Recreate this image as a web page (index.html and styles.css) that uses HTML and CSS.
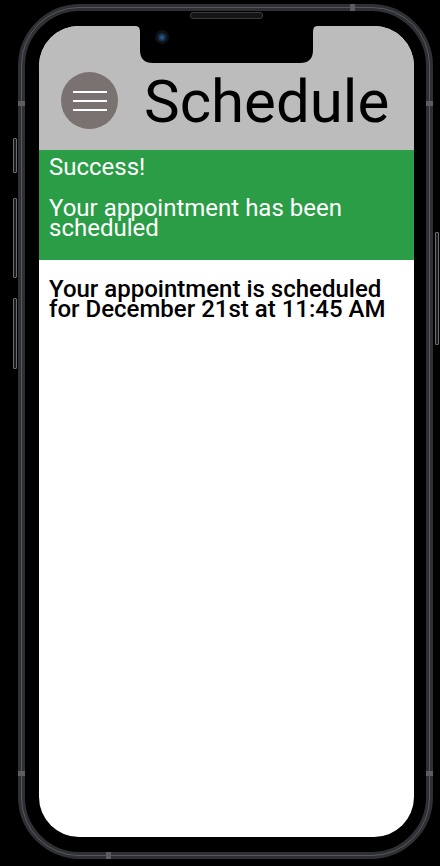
FILE: index.html
```html
<!DOCTYPE html>
<html lang="en">
<head>
<meta charset="utf-8">
<title>Schedule</title>
<link rel="stylesheet" href="styles.css">
</head>
<body>
<div class="device">
  <span class="frame-line"></span>
  <span class="btn btn-mute"></span>
  <span class="btn btn-vol-up"></span>
  <span class="btn btn-vol-down"></span>
  <span class="btn btn-power"></span>
  <span class="band band-top"></span>
  <span class="band band-left1"></span>
  <span class="band band-right1"></span>
  <span class="band band-left2"></span>
  <span class="band band-right2"></span>
  <span class="band band-bottom"></span>
  <span class="speaker"></span>
  <div class="screen">
    <header class="topbar">
      <button class="menu-btn" aria-label="Menu">
        <span class="menu-line"></span>
        <span class="menu-line"></span>
        <span class="menu-line"></span>
      </button>
      <h1 class="title">Schedule</h1>
    </header>
    <div class="alert">
      <p class="alert-title">Success!</p>
      <p class="alert-text">Your appointment has been scheduled</p>
    </div>
    <main class="content">
      <p class="confirm">Your appointment is scheduled for December 21st at 11:45 AM</p>
    </main>
  </div>
  <svg class="notch" width="181" height="38" viewBox="0 0 181 38" aria-hidden="true">
    <path d="M0 0 H181 Q177 0 177 6 V24 Q177 37 164 37 H17 Q4 37 4 24 V6 Q4 0 0 0 Z" fill="#000"/>
  </svg>
  <span class="camera"></span>
</div>
</body>
</html>
```

FILE: styles.css
```css
html, body {
  margin: 0;
  padding: 0;
}

body {
  background: #000;
  width: 440px;
  height: 866px;
  overflow: hidden;
  font-family: Roboto, "Liberation Sans", Arial, sans-serif;
}

.device {
  position: relative;
  box-sizing: border-box;
  width: 415px;
  height: 855px;
  margin: 4px 0 0 18px;
  padding: 15px 12px 15px 14px;
  border: 7px solid #2e3034;
  border-radius: 62px;
  background: #000;
}

.frame-line {
  position: absolute;
  inset: -4px;
  border: 1px solid #55585d;
  border-radius: 58px;
  pointer-events: none;
}

.btn {
  position: absolute;
  width: 2px;
  border: 1px solid #6a6c70;
  border-radius: 1px;
  background: #1a1b1d;
}

.btn-mute { left: -12px; top: 127px; height: 33px; }
.btn-vol-up { left: -12px; top: 187px; height: 78px; }
.btn-vol-down { left: -12px; top: 287px; height: 69px; }
.btn-power { right: -13px; top: 221px; height: 111px; }

.band {
  position: absolute;
  background: #5b5d61;
}

.band-top { top: -7px; left: 325px; width: 5px; height: 7px; }
.band-left1 { left: -7px; top: 90px; width: 7px; height: 5px; }
.band-right1 { right: -7px; top: 90px; width: 7px; height: 5px; }
.band-left2 { left: -7px; top: 760px; width: 7px; height: 5px; }
.band-right2 { right: -7px; top: 760px; width: 7px; height: 5px; }
.band-bottom { bottom: -7px; left: 81px; width: 5px; height: 7px; }

.speaker {
  position: absolute;
  left: 165px;
  top: 1px;
  width: 71px;
  height: 5px;
  border: 1px solid #3a3b3e;
  border-radius: 3px;
  background: #151517;
}

.notch {
  position: absolute;
  left: 111px;
  top: 15px;
}

.camera {
  position: absolute;
  left: 132px;
  top: 21px;
  width: 10px;
  height: 10px;
  border-radius: 50%;
  background: radial-gradient(circle at 50% 55%, #2f6496 0, #1a3a58 35%, #0d131c 70%, #15171a 100%);
  box-shadow: 0 0 0 2px #101114;
}

.screen {
  height: 811px;
  border-radius: 40px;
  overflow: hidden;
  background: #fff;
}

.topbar {
  box-sizing: border-box;
  height: 124px;
  display: flex;
  align-items: center;
  gap: 26px;
  padding: 46px 0 21px 22px;
  background: #bcbcbc;
}

.menu-btn {
  width: 57px;
  height: 57px;
  flex: none;
  display: flex;
  flex-direction: column;
  align-items: center;
  justify-content: center;
  gap: 7px;
  padding: 0;
  border: 0;
  border-radius: 50%;
  background: #7a7171;
}

.menu-line {
  display: block;
  width: 34px;
  height: 2px;
  background: #fff;
}

.title {
  margin: 0;
  font-size: 60px;
  line-height: 60px;
  font-weight: 400;
  color: #000;
  position: relative;
  top: 1px;
}

.alert {
  padding: 7px 10px 22px 10px;
  background: #2a9d46;
  color: #fff;
  font-size: 24px;
  line-height: 20px;
}

.alert p {
  margin: 0;
}

.alert .alert-title {
  margin-bottom: 21px;
}

.content {
  padding: 19px 10px;
}

.confirm {
  margin: 0;
  font-size: 24px;
  line-height: 20px;
  font-weight: 500;
  color: #000;
}
```
